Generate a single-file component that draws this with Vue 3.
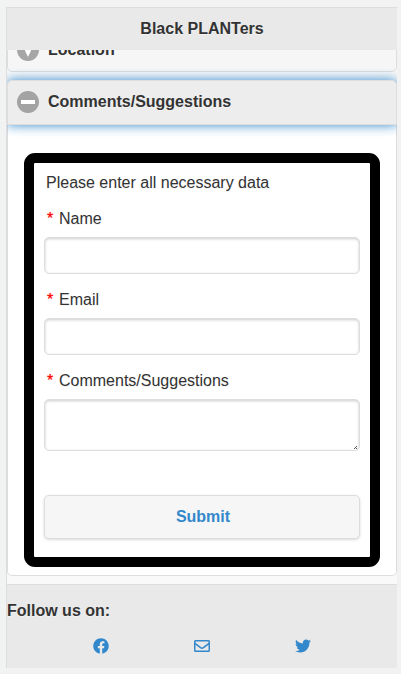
<script setup>
const fields = [
  { id: 'name', label: 'Name', type: 'input' },
  { id: 'email', label: 'Email', type: 'input' },
  { id: 'comments', label: 'Comments/Suggestions', type: 'textarea' },
]

const socials = [
  {
    name: 'facebook',
    d: 'M504 256C504 119 393 8 256 8S8 119 8 256c0 123.78 90.69 226.38 209.25 245V327.69h-63V256h63v-54.64c0-62.15 37-96.48 93.67-96.48 27.14 0 55.52 4.84 55.52 4.84v61h-31.28c-30.8 0-40.41 19.12-40.41 38.73V256h68.78l-11 71.69h-57.78V501C413.31 482.38 504 379.78 504 256z',
  },
  {
    name: 'envelope',
    d: 'M464 64H48C21.49 64 0 85.49 0 112v288c0 26.51 21.49 48 48 48h416c26.51 0 48-21.49 48-48V112c0-26.51-21.49-48-48-48zm0 48v40.805c-22.422 18.259-58.168 46.651-134.587 106.49-16.841 13.247-50.201 45.072-73.413 44.701-23.208.375-56.579-31.459-73.413-44.701C106.18 199.465 70.425 171.067 48 152.805V112h416zM48 400V214.398c22.914 18.251 55.409 43.862 104.938 82.646 21.857 17.205 60.134 55.186 103.062 54.955 42.717.231 80.509-37.199 103.053-54.947 49.528-38.783 82.032-64.401 104.947-82.653V400H48z',
  },
  {
    name: 'twitter',
    d: 'M459.37 151.716c.325 4.548.325 9.097.325 13.645 0 138.72-105.583 298.558-298.558 298.558-59.452 0-114.68-17.219-161.137-47.106 8.447.974 16.568 1.299 25.34 1.299 49.055 0 94.213-16.568 130.274-44.832-46.132-.975-84.792-31.188-98.112-72.772 6.498.974 12.995 1.624 19.818 1.624 9.421 0 18.843-1.3 27.614-3.573-48.081-9.747-84.143-51.98-84.143-102.985v-1.299c13.969 7.797 30.214 12.67 47.431 13.319-28.264-18.843-46.781-51.005-46.781-87.391 0-19.492 5.197-37.36 14.294-52.954 51.655 63.675 129.3 105.258 216.365 109.807-1.624-7.797-2.599-15.918-2.599-24.04 0-57.828 46.782-104.934 104.934-104.934 30.213 0 57.502 12.67 76.67 33.137 23.715-4.548 46.456-13.32 66.599-25.34-7.798 24.366-24.366 44.833-46.132 57.827 21.117-2.273 41.584-8.122 60.426-16.243-14.292 20.791-32.161 39.308-52.628 54.253z',
  },
]
</script>

<template>
  <div class="page">
    <header class="header"><h1>Black PLANTers</h1></header>
    <main class="content">
      <div class="clip">
        <div class="heading location">
          <svg class="badge" viewBox="0 0 22 22">
            <circle cx="11" cy="11" r="11" fill="#a6a6a6" />
            <path transform="translate(4 4)" fill="#fff" fill-rule="evenodd" d="M7,0C4.791,0,3,1.791,3,4c0,2,4,10,4,10s4-8,4-10C11,1.791,9.209,0,7,0z M7,6C5.896,6,5,5.104,5,4s0.896-2,2-2c1.104,0,2,0.896,2,2S8.104,6,7,6z" />
          </svg>
          <span>Location</span>
        </div>
      </div>
      <section class="collapsible">
        <div class="heading active">
          <svg class="badge" viewBox="0 0 22 22">
            <circle cx="11" cy="11" r="11" fill="#a3a3a3" />
            <rect x="4" y="9" width="14" height="4" fill="#fff" />
          </svg>
          <span>Comments/Suggestions</span>
        </div>
        <div class="body">
          <form class="form" @submit.prevent>
            <p class="intro">Please enter all necessary data</p>
            <div v-for="f in fields" :key="f.id" class="field">
              <label :for="f.id"><span class="star">*</span>{{ f.label }}</label>
              <div class="box">
                <component :is="f.type" :id="f.id" class="control" :class="f.type" />
                <svg v-if="f.type === 'textarea'" class="grip" viewBox="0 0 4 4">
                  <path d="M0 3h1v1H0zM1 2h1v1H1zM2 1h1v1H2zM2 3h1v1H2z" />
                </svg>
              </div>
            </div>
            <button class="submit">Submit</button>
          </form>
        </div>
      </section>
    </main>
    <footer class="footer">
      <h2>Follow us on:</h2>
      <nav class="socials">
        <a v-for="s in socials" :key="s.name">
          <svg viewBox="0 0 512 512"><path :d="s.d" /></svg>
        </a>
      </nav>
    </footer>
  </div>
</template>

<style>
body {
  background: linear-gradient(90deg, #f1f3f2, #f2f2f2 8px);
}
</style>

<style scoped>
* {
  box-sizing: border-box;
}
.page {
  width: 391px;
  height: 661px;
  margin: 7px 0 0 6px;
  display: flex;
  flex-direction: column;
  background: #f9f9f9;
  color: #333;
  font: 16px/20px "Liberation Sans", Arial, sans-serif;
  border-left: 1px solid #ddd;
  text-shadow: 0 1px 0 #f3f3f3;
}
.header {
  height: 43px;
  display: flex;
  align-items: center;
  justify-content: center;
  background: #e9e9e9;
  border-top: 1px solid #ddd;
}
h1,
h2 {
  margin: 0;
  font-size: 16px;
  line-height: 20px;
}
.content {
  height: 534px;
}
.clip {
  height: 22px;
  display: flex;
  flex-direction: column;
  justify-content: flex-end;
  overflow: hidden;
}
.heading {
  height: 45px;
  flex: none;
  display: flex;
  align-items: center;
  gap: 9px;
  padding: 0 9px;
  border: 1px solid #ddd;
  font-weight: bold;
}
.badge {
  width: 22px;
  height: 22px;
}
.location {
  background: #f6f6f6;
  border-radius: 0 0 5px 5px;
}
.collapsible {
  margin-top: 8px;
  background: #fff;
  border-radius: 5px;
}
.active {
  padding-bottom: 1px;
  background: #ededed;
  border-radius: 5px 5px 0 0;
  box-shadow: 0 0 12px #3388cc;
  clip-path: inset(-12px 0);
}
.body {
  height: 451px;
  padding: 28px 16px 8px;
  border: solid #ddd;
  border-width: 0 1px 1px;
  border-radius: 0 0 5px 5px;
}
.form {
  width: 356px;
  height: 414px;
  padding: 10px 10px 0;
  border: 10px solid #000;
  border-radius: 11px;
}
.intro {
  margin: 0 0 16px 2px;
}
.field label {
  display: block;
  height: 20px;
  margin: 0 0 8px 3px;
}
.star {
  display: inline-block;
  width: 12px;
  color: #f00;
  text-shadow: 0 0 1px rgba(255, 0, 0, 0.6);
}
.box {
  position: relative;
  margin-bottom: 16px;
}
.control {
  display: block;
  width: 316px;
  padding: 6px;
  margin: 0;
  outline: none;
  background: #fff;
  border: 1px solid #ddd;
  border-radius: 5px;
  box-shadow: inset 0 1px 3px rgba(0, 0, 0, 0.2);
}
.input {
  height: 37px;
}
.textarea {
  height: 52px;
  resize: none;
}
.grip {
  position: absolute;
  right: 2px;
  bottom: 2px;
  width: 4px;
  height: 4px;
  fill: #555;
  shape-rendering: crispEdges;
}
.submit {
  display: block;
  width: 316px;
  height: 44px;
  margin-top: 44px;
  padding: 0 0 0 2px;
  background: #f6f6f6;
  border: 1px solid #ddd;
  border-radius: 5px;
  box-shadow: 0 1px 3px rgba(0, 0, 0, 0.15);
  color: #38c;
  font: bold 16px/20px "Liberation Sans", Arial, sans-serif;
}
.footer {
  height: 84px;
  padding-top: 16px;
  background: #e9e9e9;
  border-top: 1px solid #ddd;
}
.socials {
  display: flex;
  justify-content: center;
  gap: 85px;
  margin-top: 17px;
}
.socials a {
  width: 16px;
  height: 16px;
}
.socials svg {
  display: block;
  width: 16px;
  height: 16px;
  fill: #38c;
}
</style>
